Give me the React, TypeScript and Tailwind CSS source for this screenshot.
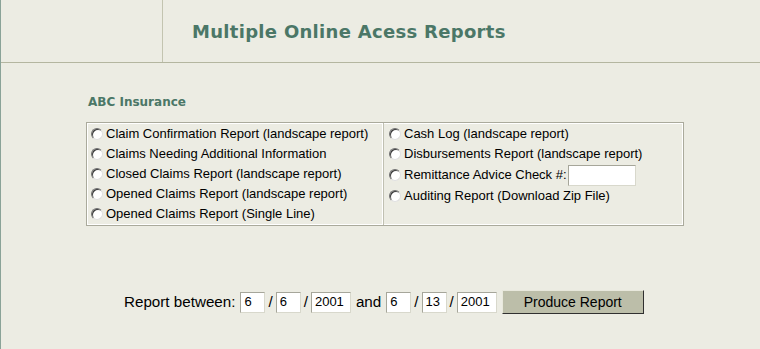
import React from "react";

const Radio = () => (
  <span className="inline-block w-[12px] h-[12px] rounded-full bg-white border border-t-[#6f6f6f] border-l-[#6f6f6f] border-r-[#e0e0e0] border-b-[#e0e0e0] shadow-[inset_1px_1px_0_#3a3a3a] mr-[3px] shrink-0" />
);

const Row = ({ children, h = "h-[20px]" }: { children: React.ReactNode; h?: string }) => (
  <div className={`flex items-center ${h} pl-[4px]`}>
    <Radio />
    <span>{children}</span>
  </div>
);

const Field = ({ value, w }: { value: string; w: string }) => (
  <span
    className={`inline-flex items-center ${w} h-[21px] bg-white border border-t-[#a6a69a] border-l-[#a6a69a] border-r-[#d8d8cc] border-b-[#d8d8cc] pl-[3px] text-[13px] text-black`}
  >
    {value}
  </span>
);

export default function App() {
  return (
    <div
      className="w-[760px] h-[349px] bg-[#ECECE3] border-l border-[#8aa398] overflow-hidden"
      style={{ fontFamily: '"Liberation Sans", Arial, sans-serif' }}
    >
      <div className="flex h-[63px] border-b border-[#b4b6a0]">
        <div className="w-[162px] border-r border-[#c3c4b0]" />
        <div className="flex items-center pl-[29px] pt-[1px]">
          <h1
            className="text-[18px] font-bold text-[#4b7767] tracking-[0.3px]"
            style={{ fontFamily: '"DejaVu Sans", Verdana, sans-serif' }}
          >
            Multiple Online Acess Reports
          </h1>
        </div>
      </div>

      <div className="pl-[85px]">
        <div
          className="mt-[32px] ml-[2px] h-[14px] leading-[14px] text-[12px] font-bold text-[#4b7767]"
          style={{ fontFamily: '"DejaVu Sans", Verdana, sans-serif' }}
        >
          ABC Insurance
        </div>

        <div className="mt-[13px] w-[598px] h-[104px] border border-[#aaaa9c] shadow-[inset_0_0_0_1px_#ffffff] flex text-[13px] text-black">
          <div className="w-[297px] pt-[1px] border-r border-[#c0c0b2] shadow-[inset_-1px_0_0_#ffffff]">
            <Row>Claim Confirmation Report (landscape report)</Row>
            <Row>Claims Needing Additional Information</Row>
            <Row>Closed Claims Report (landscape report)</Row>
            <Row>Opened Claims Report (landscape report)</Row>
            <Row>Opened Claims Report (Single Line)</Row>
          </div>
          <div className="flex-1 pt-[1px] pl-[1px]">
            <Row>Cash Log (landscape report)</Row>
            <Row>Disbursements Report (landscape report)</Row>
            <Row h="h-[22px]">
              <span className="inline-flex items-center">
                Remittance Advice Check #:
                <span className="inline-block w-[68px] h-[21px] bg-white border border-t-[#a6a69a] border-l-[#a6a69a] border-r-[#d8d8cc] border-b-[#d8d8cc] ml-[1px]" />
              </span>
            </Row>
            <Row>Auditing Report (Download Zip File)</Row>
          </div>
        </div>

        <div className="mt-[64px] ml-[38px] flex items-center text-[15.2px] text-black h-[24px]">
          <span className="mr-[5px]">Report between:</span>
          <Field value="6" w="w-[25px]" />
          <span className="mx-[3px]">/</span>
          <Field value="6" w="w-[25px]" />
          <span className="mx-[3px]">/</span>
          <Field value="2001" w="w-[40px]" />
          <span className="mx-[5px]">and</span>
          <Field value="6" w="w-[25px]" />
          <span className="mx-[3px]">/</span>
          <Field value="13" w="w-[25px]" />
          <span className="mx-[3px]">/</span>
          <Field value="2001" w="w-[40px]" />
          <button className="ml-[5px] w-[142px] h-[24px] bg-[#bcbea9] border border-t-[#e8e8dc] border-l-[#e8e8dc] border-r-[#303030] border-b-[#303030] text-[14px] text-black flex items-center justify-center">
            Produce Report
          </button>
        </div>
      </div>
    </div>
  );
}
